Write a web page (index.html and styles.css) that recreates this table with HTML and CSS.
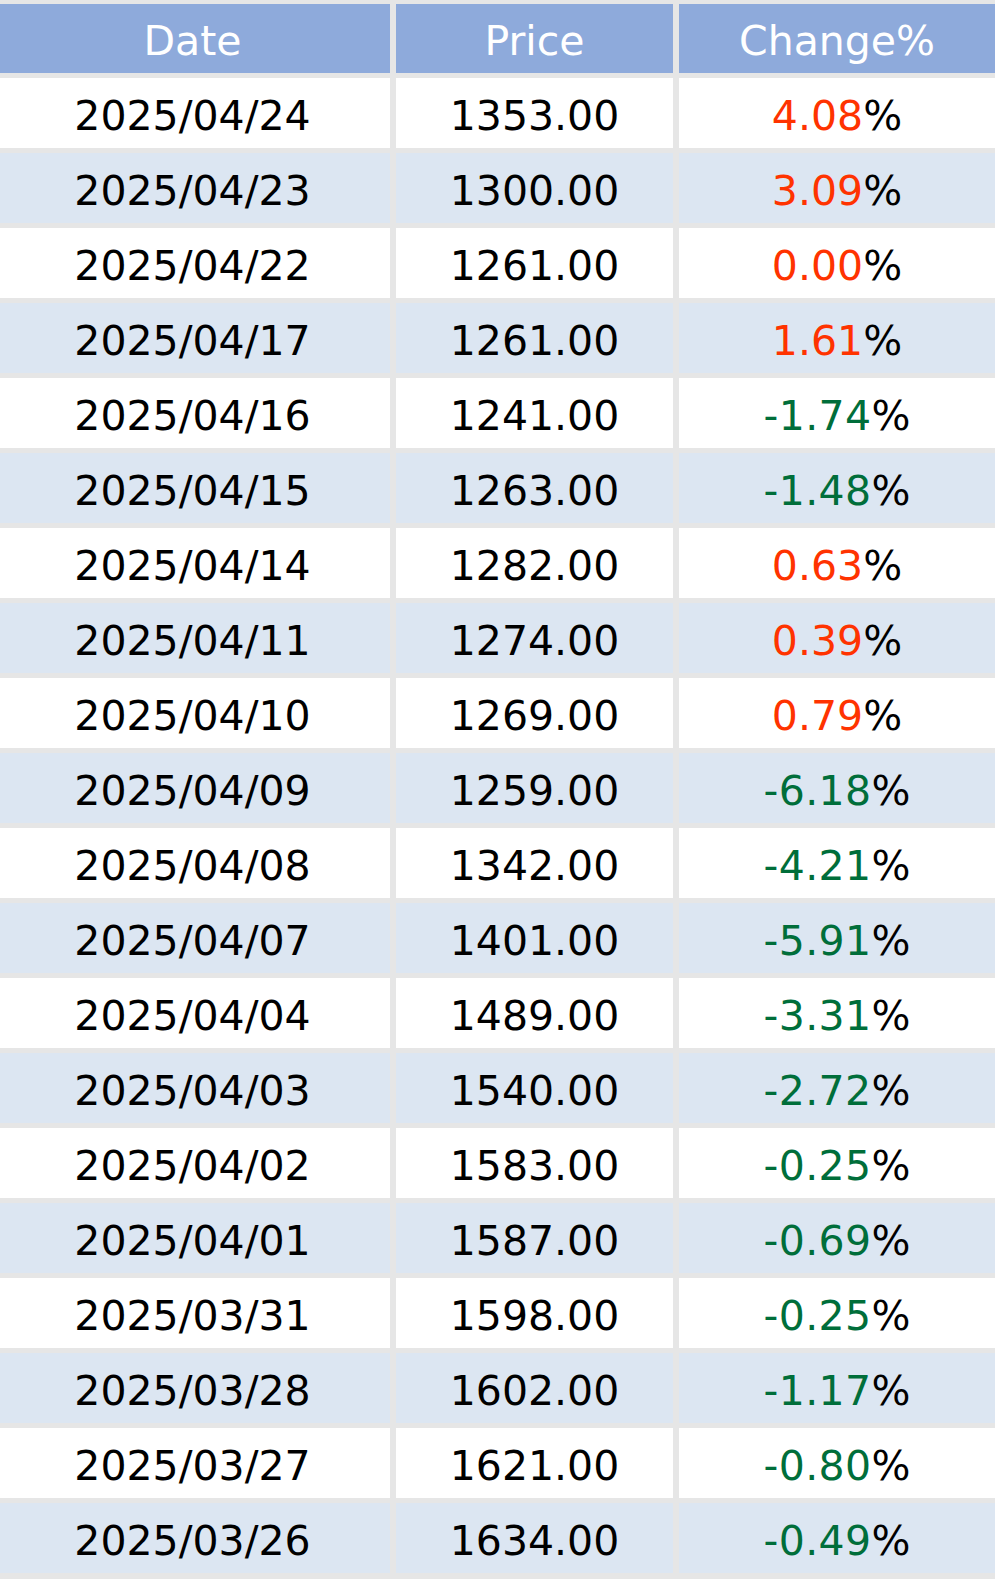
FILE: index.html
```html
<!DOCTYPE html>
<html lang="en">
<head>
<meta charset="utf-8">
<title>Price history</title>
<link rel="stylesheet" href="styles.css">
</head>
<body>
<div class="table" role="table">
  <div class="row head" role="row">
    <div class="cell" role="columnheader">Date</div>
    <div class="cell" role="columnheader">Price</div>
    <div class="cell" role="columnheader">Change%</div>
  </div>
  <div class="row" role="row"><div class="cell">2025/04/24</div><div class="cell">1353.00</div><div class="cell"><span class="up">4.08</span>%</div></div>
  <div class="row" role="row"><div class="cell">2025/04/23</div><div class="cell">1300.00</div><div class="cell"><span class="up">3.09</span>%</div></div>
  <div class="row" role="row"><div class="cell">2025/04/22</div><div class="cell">1261.00</div><div class="cell"><span class="up">0.00</span>%</div></div>
  <div class="row" role="row"><div class="cell">2025/04/17</div><div class="cell">1261.00</div><div class="cell"><span class="up">1.61</span>%</div></div>
  <div class="row" role="row"><div class="cell">2025/04/16</div><div class="cell">1241.00</div><div class="cell"><span class="down">-1.74</span>%</div></div>
  <div class="row" role="row"><div class="cell">2025/04/15</div><div class="cell">1263.00</div><div class="cell"><span class="down">-1.48</span>%</div></div>
  <div class="row" role="row"><div class="cell">2025/04/14</div><div class="cell">1282.00</div><div class="cell"><span class="up">0.63</span>%</div></div>
  <div class="row" role="row"><div class="cell">2025/04/11</div><div class="cell">1274.00</div><div class="cell"><span class="up">0.39</span>%</div></div>
  <div class="row" role="row"><div class="cell">2025/04/10</div><div class="cell">1269.00</div><div class="cell"><span class="up">0.79</span>%</div></div>
  <div class="row" role="row"><div class="cell">2025/04/09</div><div class="cell">1259.00</div><div class="cell"><span class="down">-6.18</span>%</div></div>
  <div class="row" role="row"><div class="cell">2025/04/08</div><div class="cell">1342.00</div><div class="cell"><span class="down">-4.21</span>%</div></div>
  <div class="row" role="row"><div class="cell">2025/04/07</div><div class="cell">1401.00</div><div class="cell"><span class="down">-5.91</span>%</div></div>
  <div class="row" role="row"><div class="cell">2025/04/04</div><div class="cell">1489.00</div><div class="cell"><span class="down">-3.31</span>%</div></div>
  <div class="row" role="row"><div class="cell">2025/04/03</div><div class="cell">1540.00</div><div class="cell"><span class="down">-2.72</span>%</div></div>
  <div class="row" role="row"><div class="cell">2025/04/02</div><div class="cell">1583.00</div><div class="cell"><span class="down">-0.25</span>%</div></div>
  <div class="row" role="row"><div class="cell">2025/04/01</div><div class="cell">1587.00</div><div class="cell"><span class="down">-0.69</span>%</div></div>
  <div class="row" role="row"><div class="cell">2025/03/31</div><div class="cell">1598.00</div><div class="cell"><span class="down">-0.25</span>%</div></div>
  <div class="row" role="row"><div class="cell">2025/03/28</div><div class="cell">1602.00</div><div class="cell"><span class="down">-1.17</span>%</div></div>
  <div class="row" role="row"><div class="cell">2025/03/27</div><div class="cell">1621.00</div><div class="cell"><span class="down">-0.80</span>%</div></div>
  <div class="row" role="row"><div class="cell">2025/03/26</div><div class="cell">1634.00</div><div class="cell"><span class="down">-0.49</span>%</div></div>
</div>
</body>
</html>
```
FILE: styles.css
```css
html, body {
  margin: 0;
  padding: 0;
  background: #e6e6e6;
}

body {
  font-family: "DejaVu Sans", Verdana, sans-serif;
  font-size: 41px;
  color: #000;
}

.table {
  display: flex;
  flex-direction: column;
  gap: 5px;
  padding-top: 4px;
  width: 995px;
}

.row {
  display: grid;
  grid-template-columns: 390px 277px 1fr;
  column-gap: 6px;
}

.cell {
  height: 70px;
  box-sizing: border-box;
  padding-top: 6px;
  line-height: 64px;
  text-align: center;
  white-space: nowrap;
  background: #ffffff;
}

.cell:first-child {
  padding-right: 5px;
}

.row:nth-child(odd) .cell {
  background: #dce6f2;
}

.row.head .cell {
  height: 69px;
  padding-top: 5px;
  background: #8eaadb;
  color: #ffffff;
}

.up {
  color: #ff3300;
}

.down {
  color: #006e3a;
  letter-spacing: 0.01em;
}
```
